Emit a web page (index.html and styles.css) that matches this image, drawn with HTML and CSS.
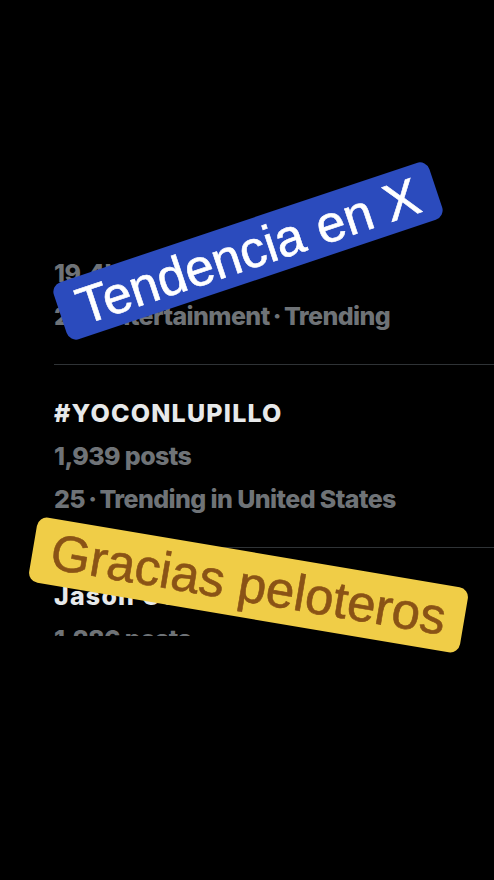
FILE: index.html
```html
<!DOCTYPE html>
<html lang="es">
<head>
  <meta charset="UTF-8" />
  <meta name="viewport" content="width=device-width, initial-scale=1.0" />
  <title>Tendencia en X</title>
  <link rel="stylesheet" href="styles.css">
</head>
<body>
  <div class="screen">
    <div class="feed">
      <div class="trends">
        <div class="trend">
          <div class="trend-name">Jason Collins</div>
          <div class="trend-meta">19.4K posts</div>
          <div class="trend-meta">24&#8201;·&#8201;Entertainment&#8201;·&#8201;Trending</div>
        </div>
        <div class="trend">
          <div class="trend-name">#YOCONLUPILLO</div>
          <div class="trend-meta">1,939 posts</div>
          <div class="trend-meta">25&#8201;·&#8201;Trending in United States</div>
        </div>
        <div class="trend">
          <div class="trend-name">Jason Collins</div>
          <div class="trend-meta">1,286 posts</div>
          <div class="trend-meta">26&#8201;·&#8201;Sports&#8201;·&#8201;Trending</div>
        </div>
      </div>
    </div>

    <!-- etiquetas encima del video -->
    <div class="tag tag-blue">Tendencia en X</div>
    <div class="tag tag-yellow">Gracias peloteros</div>
  </div>
</body>
</html>
```

FILE: styles.css
```css
html, body {
  margin: 0;
  padding: 0;
  background: #000;
}
.screen {
  position: relative;
  width: 494px;
  height: 880px;
  overflow: hidden;
  background: #000;
}
.feed {
  margin-top: 262px;
  height: 374px;
  overflow: hidden;
}
.trends {
  margin-top: -80px;
}
.trend {
  margin-left: 54px;
  padding: 27px 0 26px;
  border-bottom: 1px solid #2f3336;
  font-family: Inter, "Open Sans", sans-serif;
  font-weight: 800;
  font-size: 25px;
  line-height: 43px;
  letter-spacing: -0.6px;
  white-space: nowrap;
}
.trend-name {
  color: #e7e9ea;
  letter-spacing: 1.2px;
}
.trend-meta {
  color: #6f7377;
}
.tag {
  position: absolute;
  font-family: "Liberation Sans", Arial, sans-serif;
  text-align: center;
  border-radius: 10px;
  white-space: nowrap;
}
.tag-blue {
  left: 50px;
  top: 221px;
  width: 396px;
  height: 60px;
  line-height: 60px;
  font-size: 52px;
  background: #2b4bbd;
  color: #fff;
  -webkit-text-stroke: 0.6px #fff;
  transform: rotate(-18.5deg);
}
.tag-yellow {
  left: 30px;
  top: 552px;
  width: 437px;
  height: 66px;
  line-height: 66px;
  font-size: 51px;
  background: #f0cd47;
  color: #8a5316;
  -webkit-text-stroke: 0.6px #8a5316;
  transform: rotate(9.6deg);
}
```
